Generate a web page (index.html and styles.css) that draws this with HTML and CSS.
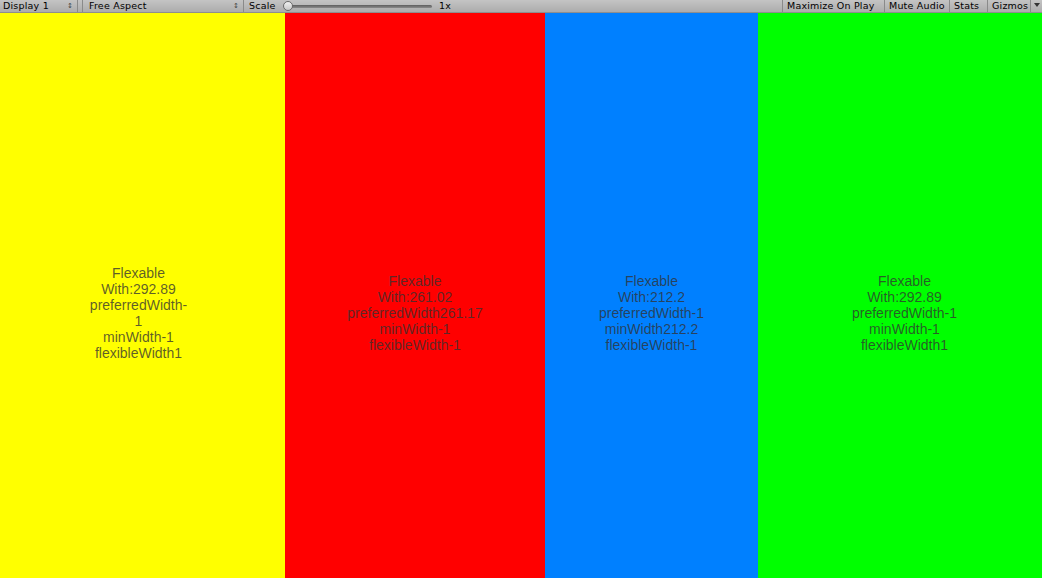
FILE: index.html
```html
<!DOCTYPE html>
<html>
<head>
<meta charset="utf-8">
<link rel="stylesheet" href="styles.css">
</head>
<body>
<div class="toolbar">
  <div class="drop drop-display"><span>Display 1</span><span class="updown">&#x2195;</span></div>
  <div class="gap"></div>
  <div class="drop drop-aspect"><span>Free Aspect</span><span class="updown">&#x2195;</span></div>
  <div class="scale">
    <span class="scale-label">Scale</span>
    <div class="slider"><div class="track"></div><div class="thumb"></div></div>
    <span class="scale-val">1x</span>
  </div>
  <div class="spacer"></div>
  <div class="btn btn-max">Maximize On Play</div>
  <div class="btn btn-mute">Mute Audio</div>
  <div class="btn btn-stats">Stats</div>
  <div class="btn btn-gizmos">Gizmos</div>
  <div class="btn btn-arrow"><span class="tri"></span></div>
</div>
<div class="canvas">
  <div class="col col-yellow">
    <div class="label label-left">
      <div>Flexable</div><div>With:292.89</div><div>preferredWidth-</div><div>1</div><div>minWidth-1</div><div>flexibleWidth1</div>
    </div>
  </div>
  <div class="col col-red">
    <div class="label">
      <div>Flexable</div><div>With:261.02</div><div>preferredWidth261.17</div><div>minWidth-1</div><div>flexibleWidth-1</div>
    </div>
  </div>
  <div class="col col-blue">
    <div class="label">
      <div>Flexable</div><div>With:212.2</div><div>preferredWidth-1</div><div>minWidth212.2</div><div>flexibleWidth-1</div>
    </div>
  </div>
  <div class="col col-green">
    <div class="label label-right">
      <div>Flexable</div><div>With:292.89</div><div>preferredWidth-1</div><div>minWidth-1</div><div>flexibleWidth1</div>
    </div>
  </div>
</div>
</body>
</html>
```
FILE: styles.css
```css
html, body {
  margin: 0;
  padding: 0;
  width: 1042px;
  height: 578px;
  overflow: hidden;
}
body {
  display: flex;
  flex-direction: column;
  font-family: "DejaVu Sans", sans-serif;
}
.toolbar {
  height: 12px;
  flex: none;
  display: flex;
  align-items: stretch;
  background: linear-gradient(#c4c4c4, #acacac);
  border-bottom: 1px solid #8e8e8e;
  font-size: 9.5px;
  line-height: 12px;
  color: #000;
  letter-spacing: 0.2px;
}
.drop {
  display: flex;
  justify-content: space-between;
  align-items: center;
  box-sizing: border-box;
  border-right: 1px solid #8a8a8a;
}
.drop-display {
  width: 78px;
  padding: 0 4px 0 3px;
}
.gap {
  width: 4px;
  border-right: 1px solid #8a8a8a;
}
.drop-aspect {
  width: 161px;
  padding: 0 4px 0 6px;
}
.updown {
  font-size: 7px;
  color: #444;
}
.scale {
  display: flex;
  align-items: center;
  padding-left: 5px;
}
.scale-label {
  width: 33px;
}
.slider {
  position: relative;
  width: 152px;
  height: 12px;
}
.track {
  position: absolute;
  left: 2px;
  right: 2px;
  top: 5px;
  height: 3px;
  border-radius: 2px;
  background: linear-gradient(#5e5e5e, #8a8a8a);
}
.thumb {
  position: absolute;
  left: 1px;
  top: 1px;
  width: 8px;
  height: 8px;
  border-radius: 50%;
  background: linear-gradient(#f0f0f0, #c8c8c8);
  border: 1px solid #6a6a6a;
}
.scale-val {
  padding-left: 5px;
}
.spacer {
  flex: 1;
}
.btn {
  box-sizing: border-box;
  border-left: 1px solid #8a8a8a;
  padding: 0 4px;
  white-space: nowrap;
}
.btn-max { width: 102px; }
.btn-mute { width: 65px; }
.btn-stats { width: 38px; }
.btn-gizmos { width: 43px; }
.btn-arrow {
  width: 12px;
  padding: 0;
  display: flex;
  justify-content: center;
  padding-top: 3px;
}
.tri {
  width: 0;
  height: 0;
  border-left: 3px solid transparent;
  border-right: 3px solid transparent;
  border-top: 4px solid #333;
}
.canvas {
  flex: 1;
  display: flex;
}
.col {
  display: flex;
  align-items: center;
  justify-content: center;
  padding-top: 34px;
  box-sizing: border-box;
}
.col-yellow { width: 285px; background: #ffff00; }
.col-red { width: 260px; background: #ff0000; }
.col-blue { width: 213px; background: #0080ff; }
.col-green { width: 284px; background: #00ff00; }
.label {
  font-family: "Liberation Sans", Arial, sans-serif;
  font-size: 14px;
  line-height: 16px;
  text-align: center;
  color: rgba(50, 50, 50, 0.78);
}
.label-left { margin-right: 8px; }
.label-right { margin-left: 9px; }
```
